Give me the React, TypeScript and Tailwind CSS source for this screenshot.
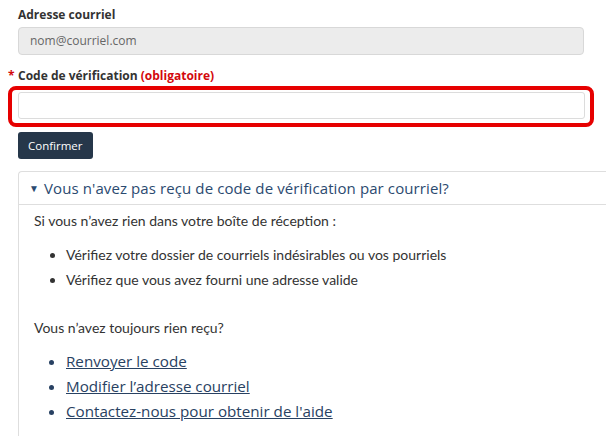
const App = () => {
  return (
    <div className="w-[606px] h-[436px] overflow-hidden bg-white text-[#333] font-['Open_Sans','Noto_Sans',sans-serif]">
      <div className="pl-[18px] pt-[5px]">
        <label className="block text-[12px] font-bold leading-[20px]">Adresse courriel</label>
        <div className="mt-[2px] w-[566px] h-[28px] rounded-[4px] border border-[#d8d8d8] bg-[#ececec] px-[11px] flex items-center text-[12px] text-[#666]">
          nom@courriel.com
        </div>

        <label className="relative block mt-[11px] text-[12px] font-bold leading-[20px]">
          <span className="absolute -left-[10px] text-[#d3080c]">*</span>
          Code de vérification <span className="text-[#d3080c]">(obligatoire)</span>
        </label>
        <div className="-ml-[10px] w-[586px] rounded-[8px] border-[4px] border-[#e60000] pl-[6px] pr-[5px] pt-[2px] pb-[4px]">
          <input className="block w-full h-[27px] rounded-[3px] border border-[#dcdcdc] bg-white outline-none" />
        </div>

        <button className="mt-[5px] h-[27px] px-[10px] rounded-[3px] bg-[#26374a] text-white text-[11.5px]">
          Confirmer
        </button>

        <div className="mt-[12px] w-[600px] rounded-tl-[4px] border-l border-t border-[#dedede]">
          <div className="h-[33px] flex items-center pl-[10px] border-b border-[#dedede] text-[15px] tracking-[0.1px] text-[#2b4a70]">
            <span className="text-[10px] mr-[5px]">▼</span>
            Vous n'avez pas reçu de code de vérification par courriel?
          </div>
          <div className="pl-[15px] pt-[3px] pb-[20px] text-[15px] leading-[25px]">
            <div className="font-['Lato',sans-serif] text-[14px]">
              <p>Si vous n’avez rien dans votre boîte de réception :</p>
              <ul className="list-disc pl-[32px] mt-[9px]">
                <li>Vérifiez votre dossier de courriels indésirables ou vos pourriels</li>
                <li>Vérifiez que vous avez fourni une adresse valide</li>
              </ul>
              <p className="mt-[23px]">Vous n’avez toujours rien reçu?</p>
            </div>
            <ul className="list-disc pl-[32px] mt-[9px] text-[15.2px] text-[#284162]">
              <li><a href="#" className="underline">Renvoyer le code</a></li>
              <li><a href="#" className="underline">Modifier l’adresse courriel</a></li>
              <li><a href="#" className="underline">Contactez-nous pour obtenir de l'aide</a></li>
            </ul>
          </div>
        </div>
      </div>
    </div>
  );
};

export default App;
